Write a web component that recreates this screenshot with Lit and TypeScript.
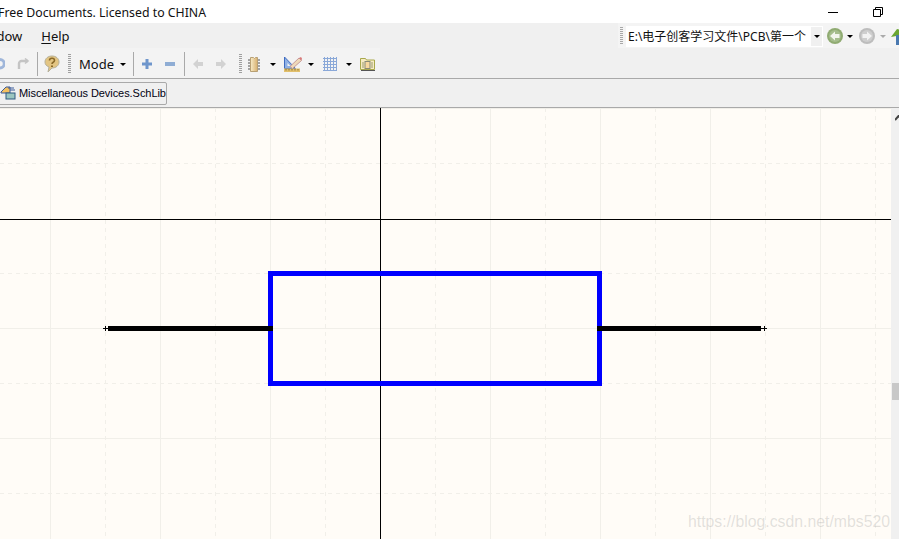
import { LitElement, html, css, svg } from "lit";
import { customElement } from "lit/decorators.js";

const SOLID_X = [50, 160, 270, 490, 600, 710, 820];
const DASH_X = [-5, 105, 215, 325, 435, 545, 655, 765, 875];
const SOLID_Y = [108, 328, 438];
const DASH_Y = [163, 273, 383, 493];

const caret = (cls = "") => html`<span class="caret ${cls}"></span>`;

@customElement("app-root")
export class AppRoot extends LitElement {
  static styles = css`
    :host { display: block; width: 899px; height: 539px; overflow: hidden; position: relative; background: #f0f0f0; font-family: "Noto Sans", "Open Sans", sans-serif; color: #111; }
    * { box-sizing: border-box; }
    .title { height: 23px; background: #fff; display: flex; align-items: center; font-size: 12.3px; overflow: hidden; white-space: nowrap; }
    .title-text { margin-left: -2px; flex: 1; line-height: 23px; padding-top: 1px; }
    .winbtn { display: block; }
    .min { margin-right: 35px; }
    .rest { margin-right: 16px; }
    .menu { height: 25px; display: flex; align-items: center; font-size: 13px; white-space: nowrap; overflow: hidden; }
    .menu-item { display: block; }
    .window { margin-left: -27px; }
    .help { margin-left: 19px; }
    .help u { text-underline-offset: 2px; }
    .addr { margin-left: auto; height: 25px; width: 281px; background: #f4f4f4; display: flex; align-items: center; flex: none; padding-left: 2px; padding-top: 1px; overflow: hidden; }
    .addr svg { flex: none; display: block; }
    .grip-v { width: 3px; height: 18px; flex: none; background: repeating-linear-gradient(#a8a8a8 0 1px, transparent 1px 2px); }
    .combo { width: 197px; height: 21px; margin-left: 3px; background: #fff; display: flex; align-items: center; flex: none; }
    .combo-text { width: 185px; padding-left: 2px; font-family: "Noto Sans", "Noto Sans CJK SC", sans-serif; font-size: 12px; white-space: nowrap; overflow: hidden; flex: none; }
    .combo-btn { width: 11px; height: 19px; background: #f0f0f0; display: flex; align-items: center; justify-content: center; flex: none; }
    .caret { width: 0; height: 0; border-left: 3px solid transparent; border-right: 3px solid transparent; border-top: 3px solid #000; display: block; flex: none; }
    .caret.dim { border-top-color: #aaa; }
    .addr .nav-back { margin-left: 4px; }
    .addr .c1 { margin-left: 4px; flex: none; }
    .addr .nav-fwd { margin-left: 6px; }
    .addr .c2 { margin-left: 5px; flex: none; }
    .addr .gem { margin-left: 5px; }
    .tools { height: 30px; display: flex; align-items: center; white-space: nowrap; overflow: hidden; }
    .band { display: flex; align-items: center; height: 30px; padding-top: 2px; background: #f3f3f3; width: 380px; flex: none; }
    .band svg { display: block; flex: none; }
    .sep { width: 1px; height: 24px; background: #a9a9a9; flex: none; }
    .grip { width: 3px; height: 20px; flex: none; background: repeating-linear-gradient(#a0a0a0 0 1px, transparent 1px 2px); }
    .undo { margin-left: -9px; }
    .redo { margin-left: 12px; }
    .s1 { margin-left: 7px; }
    .q { margin-left: 6px; }
    .g1 { margin-left: 8px; }
    .mode { margin-left: 8px; font-size: 13px; width: 41px; flex: none; }
    .s2 { margin-left: 7px; }
    .plus { margin-left: 8px; }
    .minus { margin-left: 13px; }
    .s3 { margin-left: 9px; }
    .left { margin-left: 8px; }
    .right { margin-left: 13px; }
    .g2 { margin-left: 13px; }
    .chip { margin-left: 6px; }
    .c-a { margin-left: 9px; }
    .draw { margin-left: 8px; }
    .c-b { margin-left: 6px; }
    .grid { margin-left: 9px; }
    .c-c { margin-left: 9px; }
    .folder { margin-left: 8px; }
    .docs { height: 30px; border-top: 1px solid #a9a9a9; border-bottom: 1px solid #a9a9a9; display: flex; align-items: center; overflow: hidden; }
    .tab { height: 23px; width: 171px; margin-left: -4px; flex: none; border: 1px solid #a9a9a9; border-radius: 2px; display: flex; align-items: center; padding-left: 3px; font-family: "Liberation Sans", Arial, sans-serif; font-size: 11px; white-space: nowrap; background: #f0f0f0; color: #000010; }
    .tab svg { flex: none; display: block; }
    .tab span { margin-left: 3px; letter-spacing: -0.06px; }
    .main { height: 431px; display: flex; }
    .canvas { width: 891px; height: 431px; background: #fffcf7; flex: none; display: block; }
    .scroll { flex: 1; background: #f0f0f0; position: relative; overflow: hidden; }
    .sb-arrow { display: block; margin: 7px 0 0 4px; }
    .thumb { position: absolute; left: 1px; top: 275px; width: 7px; height: 17px; background: #c8c8c8; }
    .watermark { position: absolute; right: 9px; bottom: 8px; font-family: "Liberation Sans", Arial, sans-serif; font-size: 15.8px; color: rgba(150, 150, 150, 0.28); white-space: nowrap; }
  `;

  private gridLines() {
    return svg`
      ${SOLID_X.map((x) => svg`<line x1=${x + 0.5} y1="108" x2=${x + 0.5} y2="539" stroke="#f1efe9" />`)}
      ${DASH_X.map((x) => svg`<line x1=${x + 0.5} y1="108" x2=${x + 0.5} y2="539" stroke="#f1efe9" stroke-dasharray="4 4" />`)}
      ${SOLID_Y.map((y) => svg`<line x1="0" y1=${y + 0.5} x2="891" y2=${y + 0.5} stroke="#f1efe9" />`)}
      ${DASH_Y.map((y) => svg`<line x1="0" y1=${y + 0.5} x2="891" y2=${y + 0.5} stroke="#f1efe9" stroke-dasharray="4 4" />`)}
    `;
  }

  render() {
    return html`
      <div class="title">
        <span class="title-text">Free Documents. Licensed to CHINA</span>
        <svg class="winbtn min" width="10" height="10" viewBox="0 0 10 10"><path d="M0 5.500h10" stroke="#000" /></svg>
        <svg class="winbtn rest" width="10" height="10" viewBox="0 0 10 10" fill="none" stroke="#000"><path d="M.5 2.500h7v7h-7zM2.500 2.500v-2h7v7h-2" /></svg>
      </div>
      <div class="menu">
        <span class="menu-item window">Window</span>
        <span class="menu-item help"><u>H</u>elp</span>
        <div class="addr">
          <span class="grip-v"></span>
          <div class="combo">
            <span class="combo-text">E:\\电子创客学习文件\\PCB\\第一个</span>
            <span class="combo-btn">${caret()}</span>
          </div>
          <svg class="nav-back" width="16" height="16" viewBox="0 0 16 16"><circle cx="8" cy="8" r="8" fill="#90ab72" /><circle cx="8" cy="8" r="6" fill="#a5bd8c" /><path d="M3 8l5-4.500V6h4.500v4H8v2.500z" fill="#f2f5ec" /></svg>
          <span class="c1">${caret()}</span>
          <svg class="nav-fwd" width="16" height="16" viewBox="0 0 16 16"><circle cx="8" cy="8" r="8" fill="#bdbdbd" /><circle cx="8" cy="8" r="6" fill="#cecece" /><path d="M13 8L8 3.500V6H3.500v4H8v2.500z" fill="#f2f2f2" /></svg>
          <span class="c2">${caret("dim")}</span>
          <svg class="gem" width="14" height="18" viewBox="0 0 14 18"><path d="M0 10l6-8 4 1v5z" fill="#6aa632" /><path d="M5 8h4v10H5z" fill="#4a79b0" /><path d="M9 2l5 2v12H9z" fill="#d9a63b" /></svg>
        </div>
      </div>
      <div class="tools">
        <div class="band">
          <svg class="undo" width="14" height="14" viewBox="0 0 14 14" fill="none" stroke="#9fb6da" stroke-width="3"><path d="M3 2.500h6a4 4 0 0 1 0 8.500H5" /></svg>
          <svg class="redo" width="13" height="13" viewBox="0 0 13 13" fill="none" stroke="#c4c4c4" stroke-width="2.400"><path d="M11 3H4.500A2.500 2.500 0 0 0 2 5.500V11" /><path d="M8 .5l3 2.500-3 2.500" stroke-width="1.600" /></svg>
          <span class="sep s1"></span>
          <svg class="q" width="16" height="18" viewBox="0 0 16 18"><path d="M8 1c4 0 7 2.500 7 6s-3 6-7 6l-4 4 1-5C2.500 11 1 9.500 1 7c0-3.500 3-6 7-6z" fill="#e3c583" stroke="#b5b09a" /><path d="M5.500 5.500c0-3 5-3 5 0 0 2-2.500 1.500-2.500 3.500" fill="none" stroke="#8a6a2a" stroke-width="1.600" /><path d="M7 10.500h2v1.500H7z" fill="#8a6a2a" /></svg>
          <span class="grip g1"></span>
          <span class="mode">Mode</span>
          ${caret()}
          <span class="sep s2"></span>
          <svg class="plus" width="10" height="10" viewBox="0 0 10 10"><path d="M3.500 0h3v3.500H10v3H6.500V10h-3V6.500H0v-3h3.500z" fill="#6f96cc" /></svg>
          <svg class="minus" width="10" height="4" viewBox="0 0 10 4"><path d="M0 0h10v4H0z" fill="#8fadd4" /></svg>
          <span class="sep s3"></span>
          <svg class="left" width="10" height="10" viewBox="0 0 10 10"><path d="M0 5l5-5v3h5v4H5v3z" fill="#d2d2d2" /></svg>
          <svg class="right" width="10" height="10" viewBox="0 0 10 10"><path d="M10 5L5 0v3H0v4h5v3z" fill="#d2d2d2" /></svg>
          <span class="grip g2"></span>
          <svg class="chip" width="13" height="15" viewBox="0 0 13 15"><defs><linearGradient id="cg" x1="0" x2="1"><stop offset="0" stop-color="#f8ecc8" /><stop offset="1" stop-color="#d8b070" /></linearGradient></defs><path d="M9 3h3M9 6h3M9 9h3M9 12h3M0 3h2M0 6h2M0 9h2M0 12h2" stroke="#555" /><path d="M2.500.5h3l1 1 1-1h2v14h-7z" fill="url(#cg)" stroke="#b8a074" /></svg>
          <span class="c-a">${caret()}</span>
          <svg class="draw" width="18" height="16" viewBox="0 0 18 16"><path d="M.5 1v11.500h11z" fill="#8fb0e4" stroke="#3f6cc0" /><path d="M3.500 7v3h3z" fill="#f3f3f3" /><path d="M6 10.500l9-8.500 2.500 2.500-9 8z" fill="#eed9b8" stroke="#c89a9a" /><path d="M15 2l2.500 2.500 .5-2-1-1.500z" fill="#d87a7a" /><rect x="0" y="12.500" width="16" height="3.500" fill="#e2c06c" /><path d="M2 13v1.500M5 13v1.500M8 13v1.500M11 13v1.500M14 13v1.500" stroke="#8a7030" /></svg>
          <span class="c-b">${caret()}</span>
          <svg class="grid" width="14" height="14" viewBox="0 0 14 14" stroke="#8aa8d8" shape-rendering="crispEdges"><path d="M0 1.500h14M0 4.500h14M0 7.500h14M0 10.500h14M0 13.500h14M1.500 0v14M4.500 0v14M7.500 0v14M10.500 0v14M13.500 0v14" /></svg>
          <span class="c-c">${caret()}</span>
          <svg class="folder" width="15" height="14" viewBox="0 0 15 14"><path d="M.5 2v-.5h5l1 1.500h8v9.500H.5z" fill="#f7ecc4" stroke="#a8a84c" /><path d="M2 6h2M2 8h2M2 10h2M11 6h2M11 8h2M11 10h2" stroke="#9a9a70" /><rect x="5" y="4.500" width="5" height="7" fill="#f8d8a0" stroke="#8a8a78" /><path d="M1 13.500h14" stroke="#555" /></svg>
        </div>
      </div>
      <div class="docs">
        <div class="tab">
          <svg width="16" height="16" viewBox="0 0 16 16"><path d="M1 7l5-5h4v6H1z" fill="#f3c060" stroke="#3a5a9a" /><rect x="6" y="8" width="9" height="6" fill="#9bc6c0" stroke="#2f5a80" /><path d="M8 3h6M10 5h5" stroke="#3a5a9a" /></svg>
          <span>Miscellaneous Devices.SchLib</span>
        </div>
      </div>
      <div class="main">
        <svg class="canvas" viewBox="0 108 891 431" shape-rendering="crispEdges">
          ${this.gridLines()}
          <path d="M380.500 108V539M0 219.500H891" stroke="#000" />
          <rect x="270.500" y="273.500" width="329" height="110" fill="none" stroke="#0000ff" stroke-width="4.500" />
          <path d="M103 328.500h5M105.500 326v5M761 328.500h6M764.500 326v5" stroke="#000" />
          <path d="M108 328.500H273M597 328.500H761" stroke="#000" stroke-width="5" />
        </svg>
        <div class="scroll">
          <svg class="sb-arrow" width="7" height="6" viewBox="0 0 7 6"><path d="M0 5l3.500-4L7 5" fill="none" stroke="#444" stroke-width="2" /></svg>
          <div class="thumb"></div>
        </div>
      </div>
      <div class="watermark">https://blog.csdn.net/mbs520</div>
    `;
  }
}
